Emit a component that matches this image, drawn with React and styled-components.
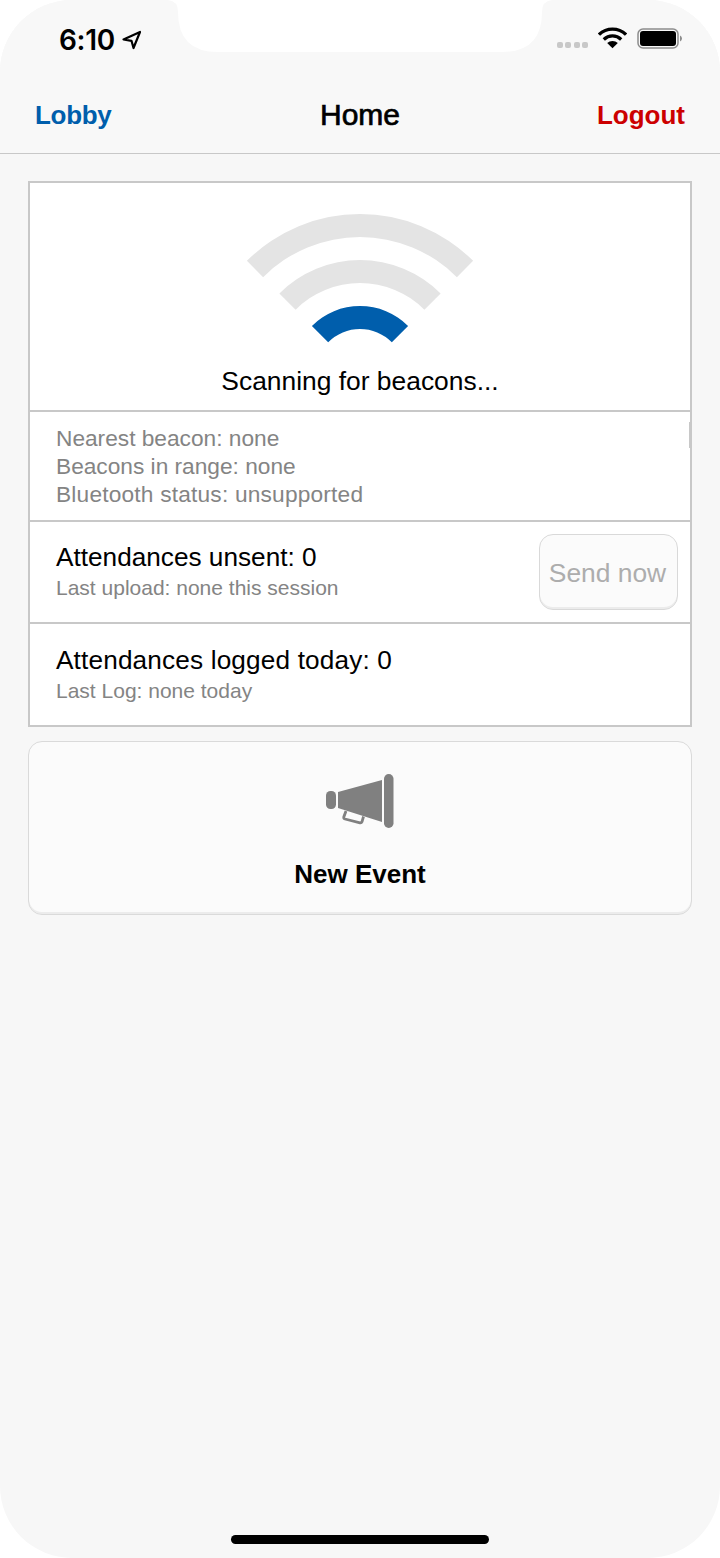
import React from "react";
import styled, { createGlobalStyle } from "styled-components";

const Global = createGlobalStyle`
  html, body { margin: 0; padding: 0; background: #fff; }
  * { box-sizing: border-box; }
`;

const Screen = styled.div`
  position: relative;
  width: 720px;
  height: 1558px;
  background: #f7f7f7;
  border-radius: 72px;
  overflow: hidden;
  font-family: "Liberation Sans", Arial, sans-serif;
  display: flex;
  flex-direction: column;
`;

const Notch = styled.svg`
  position: absolute;
  left: 168px;
  top: 0;
`;

const TopBar = styled.header`
  background: #f8f8f8;
  border-bottom: 1px solid #c8c8c8;
  height: 154px;
  display: flex;
  flex-direction: column;
  flex-shrink: 0;
`;

const StatusBar = styled.div`
  height: 76px;
  display: flex;
  align-items: center;
  justify-content: space-between;
  padding: 3px 38px 0 59px;
`;

const TimeGroup = styled.div`
  display: flex;
  align-items: center;
  gap: 7px;
`;

const Time = styled.span`
  font-family: Inter, sans-serif;
  font-weight: 600;
  font-size: 28px;
  color: #000;
  letter-spacing: -0.3px;
`;

const StatusIcons = styled.div`
  display: flex;
  align-items: center;
  margin-top: -3px;
`;

const Dots = styled.div`
  display: flex;
  gap: 2.5px;
  margin-top: 14px;
  margin-right: 10px;
`;

const Dot = styled.span`
  width: 6px;
  height: 6px;
  border-radius: 2px;
  background: #c8c8c8;
`;

const Battery = styled.svg`
  display: block;
  margin-left: 10px;
`;

const NavBar = styled.nav`
  flex: 1;
  display: flex;
  align-items: center;
  justify-content: space-between;
  padding: 2px 35px 0;
  position: relative;
`;

const NavLink = styled.a`
  font-size: 26px;
  font-weight: 700;
  color: ${(p) => p.$color};
  letter-spacing: ${(p) => p.$track || 0}px;
`;

const NavTitle = styled.h1`
  position: absolute;
  left: 0;
  right: 0;
  margin: -2px 0 0;
  text-align: center;
  font-size: 30px;
  font-weight: 400;
  -webkit-text-stroke: 0.7px #000;
  color: #000;
`;

const Content = styled.main`
  padding: 27px 28px 0;
  display: flex;
  flex-direction: column;
  gap: 14px;
`;

const Card = styled.section`
  position: relative;
  background: #fff;
  border: 2px solid #c8c8c8;
`;

const ScrollMark = styled.span`
  position: absolute;
  right: 0;
  top: 239px;
  width: 1px;
  height: 26px;
  background: #c8c8c8;
`;

const Scanner = styled.div`
  height: 227px;
  display: flex;
  flex-direction: column;
  align-items: center;
  padding-top: 31px;
`;

const ScanLabel = styled.div`
  margin-top: 19px;
  font-size: 26.4px;
  line-height: 30px;
  color: #000;
`;

const Row = styled.div`
  border-top: 2px solid #c8c8c8;
  height: ${(p) => p.$h}px;
  padding: 0 12px 0 26px;
  display: flex;
  align-items: center;
  justify-content: space-between;
`;

const GrayLines = styled.div`
  padding-bottom: 1px;
`;

const GrayLine = styled.div`
  font-size: 22.7px;
  line-height: 28px;
  color: #848484;
  letter-spacing: ${(p) => p.$track || 0}px;
`;

const RowText = styled.div`
  display: flex;
  flex-direction: column;
  margin-bottom: 2px;
`;

const RowTitle = styled.div`
  font-size: 26.2px;
  line-height: 34px;
  color: #000;
  letter-spacing: ${(p) => p.$track || 0}px;
`;

const RowSub = styled.div`
  font-size: 21px;
  line-height: 28px;
  color: #848484;
`;

const SendButton = styled.button`
  width: 139px;
  height: 76px;
  border: 1.5px solid #d9d9d9;
  border-radius: 14px;
  background: #fbfbfb;
  box-shadow: inset 0 -2px 0 #ececec;
  font-family: inherit;
  font-size: 26.4px;
  color: #adadad;
  padding: 2px 2px 0 0;
`;

const EventButton = styled.button`
  height: 174px;
  border: 1.5px solid #dadada;
  border-radius: 14px;
  background: #fbfbfb;
  box-shadow: inset 0 -2px 0 #ececec;
  display: flex;
  flex-direction: column;
  align-items: center;
  padding: 32px 0 0;
  font-family: inherit;
`;

const EventLabel = styled.span`
  margin-top: 31px;
  font-size: 26px;
  line-height: 30px;
  font-weight: 700;
  color: #000;
`;

const HomeIndicator = styled.div`
  position: absolute;
  left: 231px;
  bottom: 14px;
  width: 258px;
  height: 9px;
  border-radius: 5px;
  background: #000;
`;

const arc = (ro, ri) => {
  const d = Math.SQRT1_2;
  const c = 146;
  const cy = 160;
  return `M${c - ro * d} ${cy - ro * d}A${ro} ${ro} 0 0 1 ${c + ro * d} ${cy - ro * d}L${c + ri * d} ${cy - ri * d}A${ri} ${ri} 0 0 0 ${c - ri * d} ${cy - ri * d}Z`;
};

const WifiScan = () => (
  <svg width="292" height="133" viewBox="0 0 292 133">
    <path d={arc(160, 137)} fill="#e4e4e4" />
    <path d={arc(114, 91)} fill="#e4e4e4" />
    <path d={arc(68, 45)} fill="#005eac" />
  </svg>
);

const Megaphone = () => (
  <svg width="68" height="54" viewBox="0 0 68 54">
    <rect x="0" y="17" width="10" height="18" rx="4.500" fill="#808080" />
    <path d="M12 18L56 6V48L12 34Z" fill="#808080" />
    <rect x="58" y="0" width="9.500" height="54" rx="4.700" fill="#808080" />
    <path d="M20 37L17.800 43Q17.500 44.500 19 45L34 48.800Q35.500 49 36 47.800L37.500 42.500" fill="none" stroke="#808080" strokeWidth="2.800" />
  </svg>
);

const LocationArrow = () => (
  <svg width="20" height="20" viewBox="0 0 20 20">
    <path d="M1.500 9.500L18 2L11.500 18L9.500 10.800Z" fill="none" stroke="#000" strokeWidth="2.200" strokeLinejoin="round" />
  </svg>
);

const WifiIcon = () => (
  <svg width="29" height="22" viewBox="0 0 30 22">
    <path d="M1 7.500A20 20 0 0 1 29 7.500" fill="none" stroke="#000" strokeWidth="3.400" />
    <path d="M6 12.500A13 13 0 0 1 24 12.500" fill="none" stroke="#000" strokeWidth="3.400" />
    <path d="M9.500 16.200A8 8 0 0 1 20.500 16.200L15 21.500Z" fill="#000" />
  </svg>
);

const BatteryIcon = () => (
  <Battery width="45" height="21" viewBox="0 0 45 21">
    <rect x="1" y="1" width="40" height="19" rx="5" fill="none" stroke="#8c8c8c" strokeWidth="1.500" />
    <rect x="3" y="3" width="36" height="15" rx="3" fill="#000" />
    <path d="M43 7.500Q45 8.500 45 10.500Q45 12.500 43 13.500Z" fill="#8c8c8c" />
  </Battery>
);

export default function App() {
  return (
    <>
      <Global />
      <Screen>
        <TopBar>
          <StatusBar>
            <TimeGroup>
              <Time>6:10</Time>
              <LocationArrow />
            </TimeGroup>
            <StatusIcons>
              <Dots>
                <Dot /><Dot /><Dot /><Dot />
              </Dots>
              <WifiIcon />
              <BatteryIcon />
            </StatusIcons>
          </StatusBar>
          <NavBar>
            <NavLink $color="#005eac" $track={-0.3}>Lobby</NavLink>
            <NavTitle>Home</NavTitle>
            <NavLink $color="#cc0000">Logout</NavLink>
          </NavBar>
        </TopBar>
        <Content>
          <Card>
            <ScrollMark />
            <Scanner>
              <WifiScan />
              <ScanLabel>Scanning for beacons...</ScanLabel>
            </Scanner>
            <Row $h={110}>
              <GrayLines>
                <GrayLine>Nearest beacon: none</GrayLine>
                <GrayLine>Beacons in range: none</GrayLine>
                <GrayLine $track={0.2}>Bluetooth status: unsupported</GrayLine>
              </GrayLines>
            </Row>
            <Row $h={102}>
              <RowText>
                <RowTitle>Attendances unsent: 0</RowTitle>
                <RowSub>Last upload: none this session</RowSub>
              </RowText>
              <SendButton>Send now</SendButton>
            </Row>
            <Row $h={103}>
              <RowText>
                <RowTitle $track={0.15}>Attendances logged today: 0</RowTitle>
                <RowSub>Last Log: none today</RowSub>
              </RowText>
            </Row>
          </Card>
          <EventButton>
            <Megaphone />
            <EventLabel>New Event</EventLabel>
          </EventButton>
        </Content>
        <Notch width="384" height="53" viewBox="0 0 384 53">
          <path d="M0 0Q10 1 10 12Q10 52 50 52H334Q374 52 374 12Q374 1 384 0Z" fill="#fff" />
        </Notch>
        <HomeIndicator />
      </Screen>
    </>
  );
}
